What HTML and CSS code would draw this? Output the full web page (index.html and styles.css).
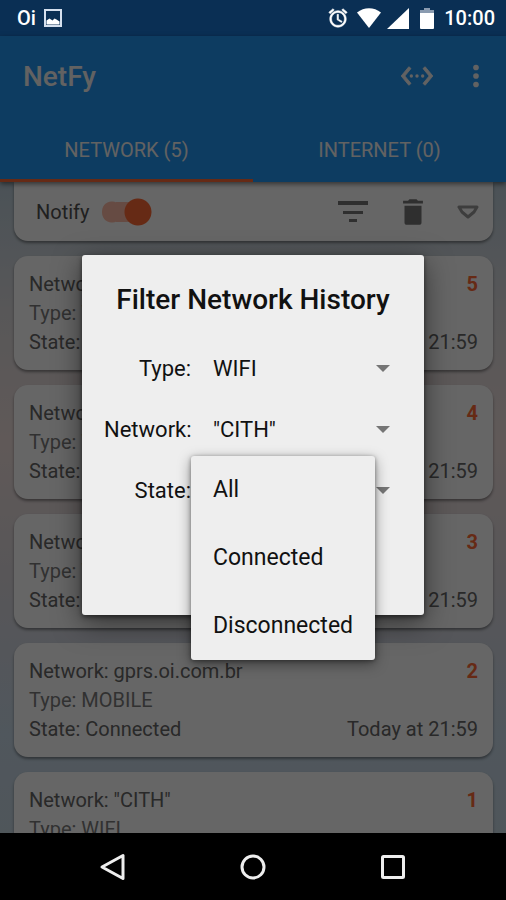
FILE: index.html
```html
<!DOCTYPE html>
<html lang="en">
<head>
<meta charset="utf-8">
<meta name="viewport" content="width=device-width, initial-scale=1">
<title>NetFy</title>
<link rel="stylesheet" href="styles.css">
</head>
<body>
<div class="screen">
  <div class="status">
    <span class="carrier">Oi</span>
    <svg class="s-pic" viewBox="0 0 18 18"><path fill="none" stroke="#d5e0ee" stroke-width="2" d="M1 1h16v16H1z"/><path fill="#fff" d="M2.500 15.500v-4l3-2 3 2 2-2 2 1 3 2v3z"/></svg>
    <span class="spacer"></span>
    <svg class="s-alarm" viewBox="0 0 24 24"><path fill="#fff" stroke="#fff" stroke-width=".6" d="M22 5.720l-4.600-3.860-1.290 1.530 4.600 3.860L22 5.720zM7.880 3.390L6.600 1.860 2 5.710l1.290 1.530 4.590-3.850zM12.500 8H11v6l4.750 2.850.75-1.230-4-2.370V8zM12 4c-4.970 0-9 4.030-9 9s4.020 9 9 9c4.970 0 9-4.030 9-9s-4.030-9-9-9zm0 16c-3.870 0-7-3.130-7-7s3.130-7 7-7 7 3.130 7 7-3.130 7-7 7z"/></svg>
    <svg class="s-wifi" viewBox="0 0 24 20"><path fill="#fff" d="M0 4.500C7 -1.200 17 -1.200 24 4.500L12 20z"/></svg>
    <svg class="s-cell" viewBox="0 0 22 21"><path fill="#fff" d="M22 0v21H0z"/></svg>
    <svg class="s-bat" viewBox="0 0 14 21"><path fill="#8a9bb0" d="M4 0h6v2h4v4H0V2h4z"/><path fill="#fff" d="M0 5h14v15a1 1 0 0 1-1 1H1a1 1 0 0 1-1-1z"/></svg>
    <span class="clock">10:00</span>
  </div>

  <div class="app">
    <header class="bar">
      <div class="toolbar">
        <h1>NetFy</h1>
        <button class="icon-btn" aria-label="Ports"><svg viewBox="0 0 24 24" width="34" height="34"><path fill="currentColor" stroke="currentColor" stroke-width=".6" d="M7.770 6.760L6.230 5.480.82 12l5.410 6.520 1.540-1.280L3.420 12l4.350-5.240zM17.770 5.480l-1.540 1.280L20.580 12l-4.350 5.240 1.540 1.280L23.180 12l-5.410-6.520z"/><circle cx="8" cy="12" r="1.200" fill="currentColor"/><circle cx="12" cy="12" r="1.200" fill="currentColor"/><circle cx="16" cy="12" r="1.200" fill="currentColor"/></svg></button>
        <button class="icon-btn" aria-label="More options"><svg viewBox="0 0 24 24" width="34" height="34"><g fill="currentColor"><circle cx="12" cy="6" r="2"/><circle cx="12" cy="12" r="2"/><circle cx="12" cy="18" r="2"/></g></svg></button>
      </div>
      <nav class="tabs">
        <button class="tab active">NETWORK (5)</button>
        <button class="tab">INTERNET (0)</button>
      </nav>
    </header>

    <main class="content">
      <section class="card notify">
        <label for="notify">Notify</label>
        <input class="switch" type="checkbox" id="notify" checked>
        <span class="spacer"></span>
        <button class="tool" aria-label="Filter"><svg viewBox="0 0 32 24" width="32" height="24"><path fill="currentColor" d="M1 1h30v4H1zM6 11h20v3H6zM12 19h8v3h-8z"/></svg></button>
        <button class="tool" aria-label="Delete"><svg viewBox="0 0 24 24" width="34" height="34"><path fill="currentColor" d="M6 19.500c0 1.100.9 1.500 2 1.500h8c1.100 0 2-.4 2-1.500V7.500H6zM19 4h-3.500l-1-1h-5l-1 1H5v2h14z"/></svg></button>
        <button class="tool expand" aria-label="Expand"><svg viewBox="0 0 22 16" width="22" height="16"><path fill="none" stroke="currentColor" stroke-width="3" stroke-linejoin="round" d="M2 3h18l-3 5-6 5-6-5z"/></svg></button>
      </section>
      <article class="card entry">
        <p class="row"><span>Network: "CITH"</span><b>5</b></p>
        <p class="row type">Type: WIFI</p>
        <p class="row"><span>State: Connected</span><time>Today at 21:59</time></p>
      </article>
      <article class="card entry">
        <p class="row"><span>Network: "CITH"</span><b>4</b></p>
        <p class="row type">Type: WIFI</p>
        <p class="row"><span>State: Connected</span><time>Today at 21:59</time></p>
      </article>
      <article class="card entry">
        <p class="row"><span>Network: "CITH"</span><b>3</b></p>
        <p class="row type">Type: WIFI</p>
        <p class="row"><span>State: Connected</span><time>Today at 21:59</time></p>
      </article>
      <article class="card entry">
        <p class="row"><span>Network: gprs.oi.com.br</span><b>2</b></p>
        <p class="row type">Type: MOBILE</p>
        <p class="row"><span>State: Connected</span><time>Today at 21:59</time></p>
      </article>
      <article class="card entry">
        <p class="row"><span>Network: "CITH"</span><b>1</b></p>
        <p class="row type">Type: WIFI</p>
      </article>
    </main>

    <div class="scrim">
      <form class="dialog" role="dialog" aria-labelledby="dlg-title">
        <h2 id="dlg-title">Filter Network History</h2>
        <div class="field">
          <label for="f-type">Type:</label>
          <div class="picker"><select id="f-type"><option>WIFI</option></select></div>
        </div>
        <div class="field">
          <label for="f-net">Network:</label>
          <div class="picker"><select id="f-net"><option>"CITH"</option></select></div>
        </div>
        <div class="field">
          <label for="f-state">State:</label>
          <div class="picker">
            <select id="f-state"><option>All</option></select>
            <div class="menu">
              <button type="button">All</button>
              <button type="button">Connected</button>
              <button type="button">Disconnected</button>
            </div>
          </div>
        </div>
      </form>
    </div>
  </div>

  <nav class="navbar">
    <button aria-label="Back"><svg viewBox="0 0 28 28" width="28" height="28"><path fill="none" stroke="#eee" stroke-width="3" stroke-linejoin="round" d="M24 2.500v23L3 14z"/></svg></button>
    <button aria-label="Home"><svg viewBox="0 0 28 28" width="28" height="28"><circle cx="14" cy="14" r="11" fill="none" stroke="#eee" stroke-width="3"/></svg></button>
    <button aria-label="Recents"><svg viewBox="0 0 28 28" width="28" height="28"><rect x="3.500" y="3.500" width="21" height="21" rx="1" fill="none" stroke="#eee" stroke-width="3"/></svg></button>
  </nav>
</div>
</body>
</html>
```
FILE: styles.css
```css
* { box-sizing: border-box; }
body { margin: 0; font-family: Roboto, "Liberation Sans", sans-serif; }
button { border: 0; background: none; padding: 0; margin: 0; font: inherit; color: inherit; }
h1, h2, p { margin: 0; }
svg { display: block; }
.spacer { flex: 1; }

.screen { height: 100vh; display: flex; flex-direction: column; overflow: hidden; background: #000; }

.status {
  height: 36px; flex: none; display: flex; align-items: center;
  padding: 0 11px 0 17px; background: #0a2f54; color: #fff;
}
.carrier { font-size: 20px; font-weight: 500; margin-right: 8px; }
.s-pic { width: 18px; height: 18px; }
.s-alarm { width: 22px; height: 22px; margin-right: 8px; }
.s-wifi { width: 24px; height: 20px; margin-right: 6px; }
.s-cell { width: 22px; height: 21px; margin-right: 11px; }
.s-bat { width: 14px; height: 21px; margin-right: 10px; }
.clock { font-size: 20px; font-weight: 500; }

.app {
  position: relative; flex: 1; min-height: 0;
  display: flex; flex-direction: column;
}
.bar { flex: none; position: relative; background: #2196f3; color: #f4f4f4; box-shadow: 0 2px 5px rgba(0, 0, 0, .5); }
.toolbar { height: 80px; display: flex; align-items: center; padding: 0 13px 0 23px; }
.toolbar h1 { flex: 1; font-size: 28px; font-weight: 500; }
.icon-btn { margin-left: 25px; }
.tabs { display: flex; }
.tab { flex: 1; height: 66px; padding-top: 4px; font-size: 20px; border-bottom: 3px solid transparent; }
.tab.active { border-bottom-color: #ff6a35; }

.content {
  flex: 1; min-height: 0; overflow: hidden;
  display: flex; flex-direction: column; gap: 15px; padding: 0 13px 0 14px;
  background: linear-gradient(#bbcdd9, #dcdadd 20%, #f0dfdd 40%, #dad7dd 62%, #c8d9e8 85%, #c6d6e2);
}
.card { flex: none; background: #fff; border-radius: 14px; box-shadow: 0 2px 3px rgba(0, 0, 0, .4); }
.notify {
  height: 59px; border-radius: 0 0 14px 14px;
  display: flex; align-items: center; padding: 1px 14px 0 22px; color: #505050;
}
.notify label { font-size: 20px; margin-right: 12px; }
.switch {
  appearance: none; margin: 0; width: 50px; height: 28px; border-radius: 14px;
  background:
    radial-gradient(circle at 36px 14px, #ff6a35 13px, transparent 14px),
    linear-gradient(#ffbca7, #ffbca7) 14px 4px / 20px 20px no-repeat,
    radial-gradient(circle at 10px 14px, #ffbca7 10px, transparent 11px);
}
.tool { margin-left: 34px; color: #757575; }
.tool + .tool { margin-left: 27px; }
.tool.expand { color: #999; }

.entry { font-size: 20px; line-height: 29px; padding: 14px 15px 13px; color: #666; }
.entry:last-child { padding-bottom: 42px; }
.row { display: flex; justify-content: space-between; }
.row b { color: #ff6a35; }
.type { color: #7c7c7c; }

.scrim {
  position: absolute; inset: 0; background: rgba(0, 0, 0, .6);
  display: flex; align-items: center; justify-content: center;
}
.dialog {
  width: 342px; padding: 29px 22px 94px; background: #eee; color: #111; border-radius: 3px;
  box-shadow: 0 8px 28px rgba(0, 0, 0, .5), 0 2px 5px rgba(0, 0, 0, .5);
}
.dialog h2 { font-size: 28px; line-height: 32px; font-weight: 500; text-align: center; margin-bottom: 22px; }
.field { display: flex; align-items: center; height: 61px; font-size: 22px; }
.field label { width: 87px; text-align: right; }
.picker { position: relative; flex: 1; }
.picker select {
  appearance: none; width: 100%; height: 61px; border: 0; margin: 0; padding: 0 22px;
  background: none; font: inherit; color: inherit;
}
.picker::after {
  content: ""; position: absolute; right: 12px; top: 27px;
  border: 7px solid transparent; border-top-color: #757575; border-bottom: 0;
}
.menu {
  position: absolute; z-index: 1; left: 0; top: -4px; width: 184px; font-size: 23px;
  display: flex; flex-direction: column; background: #eee; border-radius: 3px;
  box-shadow: 0 4px 14px rgba(0, 0, 0, .4), 0 1px 4px rgba(0, 0, 0, .4);
}
.menu button { height: 68px; padding-left: 22px; text-align: left; }

.navbar { flex: none; height: 67px; background: #000; display: flex; align-items: center; justify-content: center; }
.navbar button { width: 140px; display: flex; justify-content: center; }
```
